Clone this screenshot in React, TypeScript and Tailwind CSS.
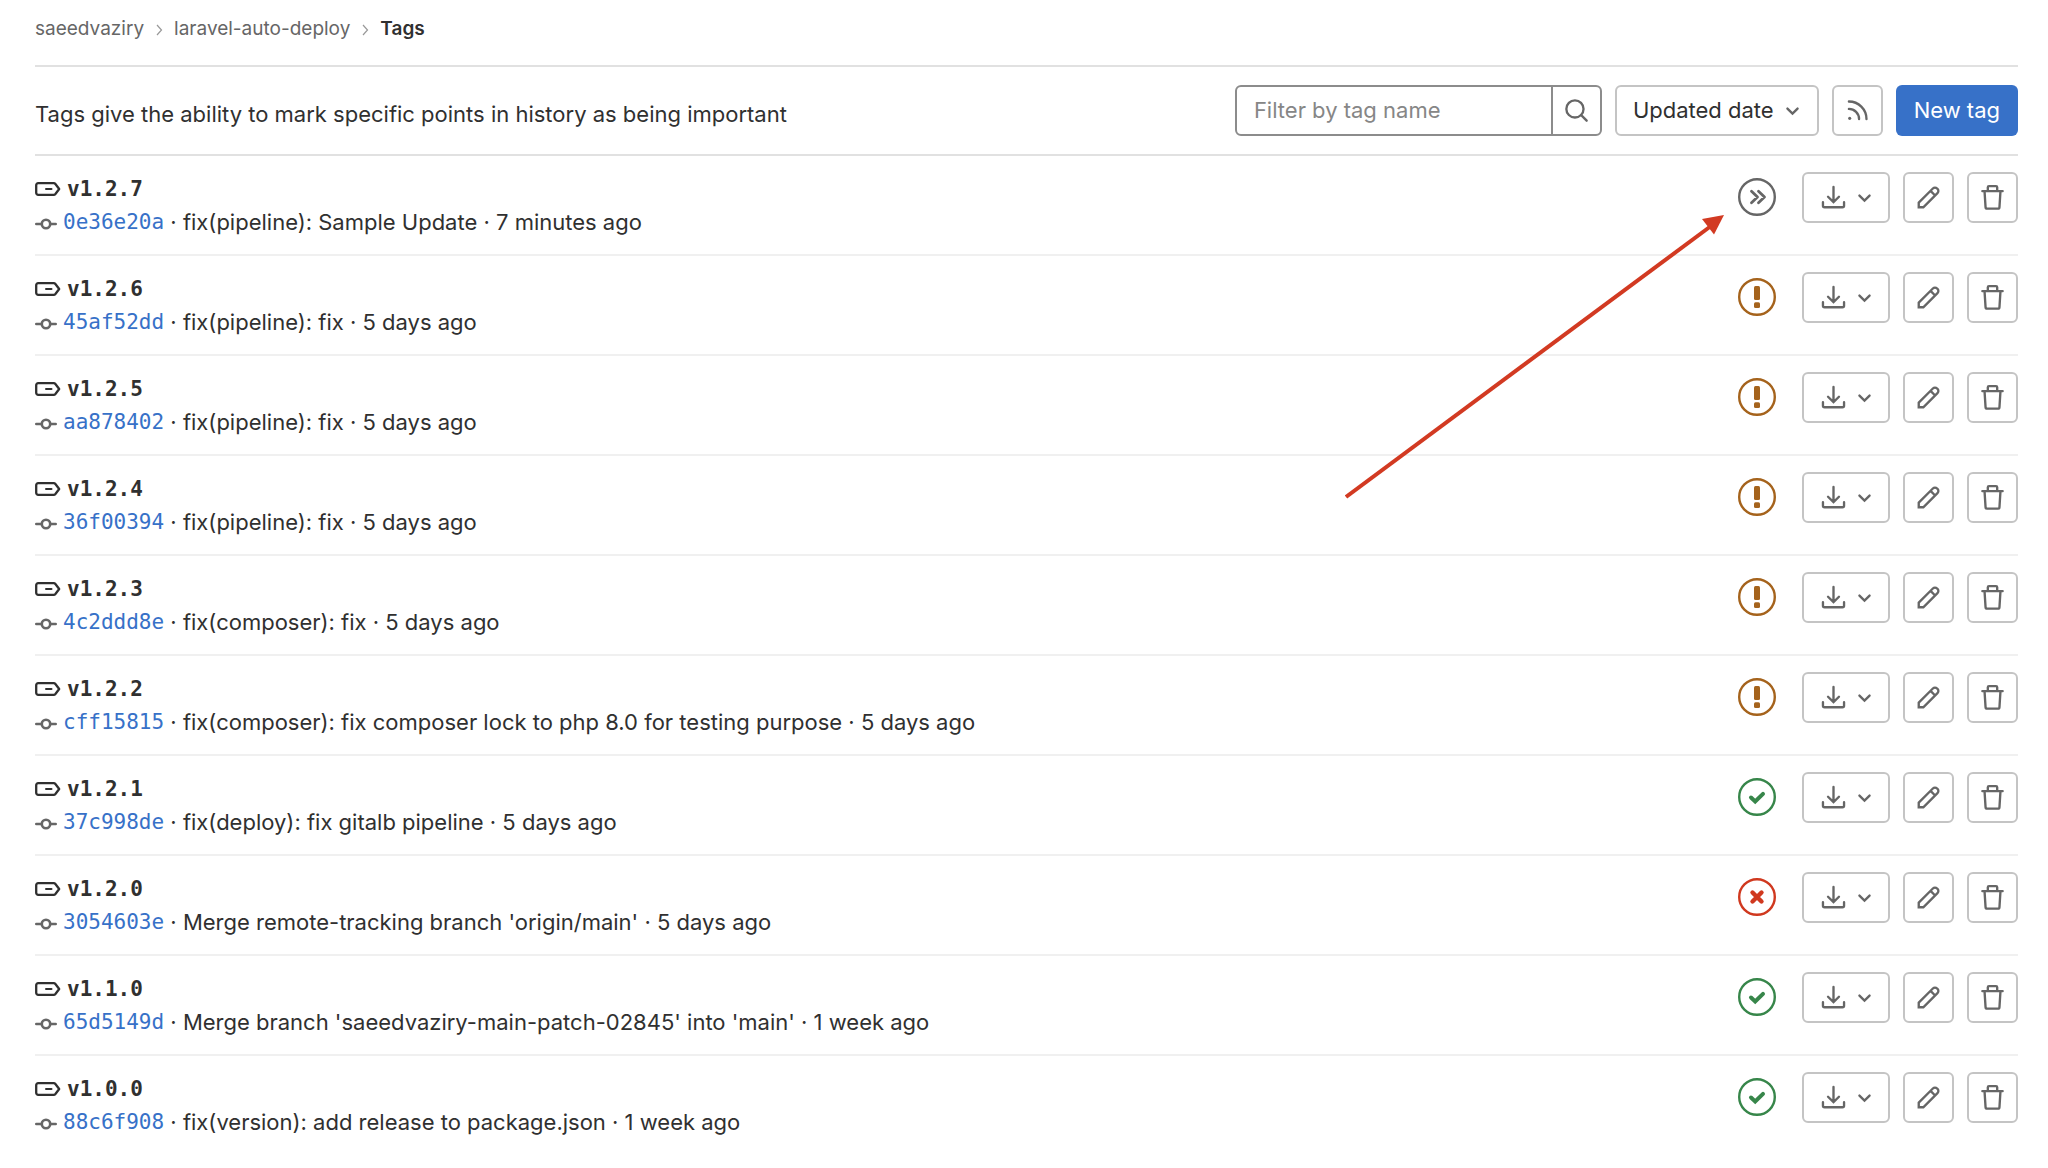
import React from "react";

type Status = "skipped" | "warning" | "success" | "failed";

interface Tag {
  name: string;
  sha: string;
  message: string;
  age: string;
  status: Status;
}

const tags: Tag[] = [
  { name: "v1.2.7", sha: "0e36e20a", message: "fix(pipeline): Sample Update", age: "7 minutes ago", status: "skipped" },
  { name: "v1.2.6", sha: "45af52dd", message: "fix(pipeline): fix", age: "5 days ago", status: "warning" },
  { name: "v1.2.5", sha: "aa878402", message: "fix(pipeline): fix", age: "5 days ago", status: "warning" },
  { name: "v1.2.4", sha: "36f00394", message: "fix(pipeline): fix", age: "5 days ago", status: "warning" },
  { name: "v1.2.3", sha: "4c2ddd8e", message: "fix(composer): fix", age: "5 days ago", status: "warning" },
  { name: "v1.2.2", sha: "cff15815", message: "fix(composer): fix composer lock to php 8.0 for testing purpose", age: "5 days ago", status: "warning" },
  { name: "v1.2.1", sha: "37c998de", message: "fix(deploy): fix gitalb pipeline", age: "5 days ago", status: "success" },
  { name: "v1.2.0", sha: "3054603e", message: "Merge remote-tracking branch 'origin/main'", age: "5 days ago", status: "failed" },
  { name: "v1.1.0", sha: "65d5149d", message: "Merge branch 'saeedvaziry-main-patch-02845' into 'main'", age: "1 week ago", status: "success" },
  { name: "v1.0.0", sha: "88c6f908", message: "fix(version): add release to package.json", age: "1 week ago", status: "success" },
];

const statusColor: Record<Status, string> = {
  skipped: "text-[#666666]",
  warning: "text-[#a5631c]",
  success: "text-[#37864a]",
  failed: "text-[#d0391f]",
};

function Icon({ className, children }: { className: string; children: React.ReactNode }) {
  return (
    <svg viewBox="0 0 16 16" fill="none" stroke="currentColor" strokeWidth="1.5" className={`shrink-0 ${className}`} aria-hidden="true">
      {children}
    </svg>
  );
}

function ChevronDown() {
  return (
    <Icon className="size-[25px]">
      <path d="M4.75 6.75 8 10l3.25-3.25" strokeLinecap="round" />
    </Icon>
  );
}

function BreadcrumbChevron() {
  return (
    <svg viewBox="0 0 8 12" fill="none" stroke="#999999" strokeWidth="1.2" className="h-3 w-2" aria-hidden="true">
      <path d="m2 1 4.5 5L2 11" />
    </svg>
  );
}

function StatusIcon({ status }: { status: Status }) {
  return (
    <a href="#pipeline" aria-label={`Pipeline: ${status}`} className={`shrink-0 ${statusColor[status]}`}>
      <svg viewBox="0 0 38 38" fill="none" stroke="currentColor" className="size-[38px]">
        <circle cx="19" cy="19" r="17.8" strokeWidth="2.4" />
        {status === "skipped" && (
          <path d="m13.5 13.3 6 5.7-6 5.7M20.5 13.3l6 5.7-6 5.7" strokeWidth="2.8" strokeLinecap="round" strokeLinejoin="round" />
        )}
        {status === "warning" && (
          <g fill="currentColor" stroke="none">
            <rect x="16" y="8" width="6" height="14" rx="1.5" />
            <rect x="16" y="24.3" width="6" height="5.7" rx="1.5" />
          </g>
        )}
        {status === "success" && (
          <path d="m13 19.5 4.2 4L25 15.8" strokeWidth="4" strokeLinecap="round" strokeLinejoin="miter" />
        )}
        {status === "failed" && <path d="m14.5 14.5 9 9m0-9-9 9" strokeWidth="4.4" strokeLinecap="round" />}
      </svg>
    </a>
  );
}

function TagRow({ tag }: { tag: Tag }) {
  return (
    <li className="flex items-start justify-between border-b-2 border-[#f0f0f0] py-4 last:border-b-0">
      <div>
        <div className="flex h-[34px] items-center gap-1.5">
          <svg viewBox="0 0 26 16" fill="none" stroke="#303030" strokeWidth="2.3" className="h-4 w-[26px]" aria-hidden="true">
            <path d="M3.2 2.2h15.5c.7 0 1.3.3 1.7.8L24.2 8l-3.8 5c-.4.5-1 .8-1.7.8H3.2A2 2 0 0 1 1.2 11.8V4.2A2 2 0 0 1 3.2 2.2Z" strokeLinejoin="round" />
            <path d="M11 8h5.5" strokeLinecap="round" strokeWidth="2" />
          </svg>
          <a href={`#${tag.name}`} className="font-['DejaVu_Sans_Mono',monospace] text-[21px] leading-8 font-bold">
            {tag.name}
          </a>
        </div>
        <div className="flex h-8 items-center whitespace-pre">
          <svg viewBox="0 0 22 16" fill="none" stroke="#666666" strokeWidth="2.6" className="mt-1 mr-1.5 h-4 w-[22px]" aria-hidden="true">
            <circle cx="11" cy="8" r="4.2" />
            <path d="M1.3 8h5M15.7 8h5" strokeLinecap="round" />
          </svg>
          <a href={`#${tag.sha}`} className="pt-0.5 font-['DejaVu_Sans_Mono',monospace] text-[21px] text-[#3771c8]">
            {tag.sha}
          </a>
          <span> · {tag.message} · {tag.age}</span>
        </div>
      </div>
      <div className="flex h-[50px] items-center gap-[13px] text-[#666666]">
        <div className="mr-[13px] flex">
          <StatusIcon status={tag.status} />
        </div>
        <button type="button" aria-label={`Download ${tag.name}`} className="flex h-[51px] w-[88px] items-center justify-center gap-1.5 rounded-md border-2 border-[#c4c4c4] bg-white pl-1.5">
          <Icon className="size-[25px]">
            <path d="M8 1.25V10.75M4.5 7.5 8 11l3.5-3.5M1.25 11v2.25a1 1 0 0 0 1 1h11.5a1 1 0 0 0 1-1V11" strokeLinecap="round" />
          </Icon>
          <ChevronDown />
        </button>
        <button type="button" aria-label={`Edit ${tag.name}`} className="flex size-[51px] items-center justify-center rounded-md border-2 border-[#c4c4c4] bg-white">
          <Icon className="size-[25px]">
            <path d="M1.75 11.3 10.8 2.25a1.9 1.9 0 0 1 2.7 0l.25.25a1.9 1.9 0 0 1 0 2.7L4.7 14.25H1.75ZM9.3 3.75l2.95 2.95" />
          </Icon>
        </button>
        <button type="button" aria-label={`Delete ${tag.name}`} className="flex size-[51px] items-center justify-center rounded-md border-2 border-[#c4c4c4] bg-white">
          <Icon className="size-[25px]">
            <path d="M1.5 3.9h13M5 3.9V1.5a.75.75 0 0 1 .75-.75h4.5a.75.75 0 0 1 .75.75v2.4M2.9 3.9l.65 10.3a1 1 0 0 0 1 .95h6.9a1 1 0 0 0 1-.95l.65-10.3" strokeLinecap="round" />
          </Icon>
        </button>
      </div>
    </li>
  );
}

export default function App() {
  return (
    <div className="relative min-h-screen overflow-hidden bg-white pr-[30px] pl-[35px] font-['Inter',sans-serif] text-[22px] text-[#303030]">
      <nav aria-label="Breadcrumb" className="border-b-2 border-[#e1e1e1]">
        <ol className="flex h-[65px] items-center gap-[11px] pb-1.5 text-[19px] text-[#666666]">
          <li><a href="#saeedvaziry">saeedvaziry</a></li>
          <li><BreadcrumbChevron /></li>
          <li><a href="#laravel-auto-deploy">laravel-auto-deploy</a></li>
          <li><BreadcrumbChevron /></li>
          <li><a href="#tags" aria-current="page" className="font-semibold text-[#303030]">Tags</a></li>
        </ol>
      </nav>
      <main>
        <header className="flex h-[89px] items-center justify-between border-b-2 border-[#e1e1e1]">
          <p className="pt-2">Tags give the ability to mark specific points in history as being important</p>
          <div className="flex gap-[13px]">
            <form role="search" className="flex h-[51px] w-[367px] overflow-hidden rounded-md border-2 border-[#8c8c8c]">
              <input type="search" aria-label="Filter by tag name" placeholder="Filter by tag name" className="min-w-0 flex-1 px-[17px] outline-none placeholder:text-[#868686]" />
              <button type="submit" aria-label="Search" className="flex w-[49px] items-center justify-center border-l-2 border-[#8c8c8c] text-[#666666]">
                <Icon className="size-[25px]">
                  <circle cx="7" cy="7" r="5.5" />
                  <path d="m11 11 3.5 3.5" strokeLinecap="round" />
                </Icon>
              </button>
            </form>
            <button type="button" className="flex h-[51px] items-center gap-1.5 rounded-md border-2 border-[#c4c4c4] bg-white pr-3 pl-4">
              Updated date
              <span className="text-[#666666]"><ChevronDown /></span>
            </button>
            <a href="#feed" aria-label="Tags feed" className="flex size-[51px] items-center justify-center rounded-md border-2 border-[#c4c4c4] text-[#666666]">
              <Icon className="size-[25px]">
                <path d="M2.5 2.25A11.25 11.25 0 0 1 13.75 13.5M2.5 7A6.5 6.5 0 0 1 9 13.5" strokeLinecap="round" />
                <circle cx="3" cy="13" r="1" fill="currentColor" stroke="none" />
              </Icon>
            </a>
            <a href="#new" className="flex h-[51px] items-center rounded-md bg-[#3771c8] px-[18px] text-white">New tag</a>
          </div>
        </header>
        <ul>
          {tags.map((tag) => (
            <TagRow key={tag.name} tag={tag} />
          ))}
        </ul>
      </main>
      <svg viewBox="0 0 380 284" className="pointer-events-none absolute top-[215px] right-[323px] h-[284px] w-[380px]" aria-hidden="true">
        <path d="M1 282 366 11" stroke="#d23a22" strokeWidth="4" fill="none" />
        <path d="m379 0-22 4 12 15.5Z" fill="#d23a22" />
      </svg>
    </div>
  );
}
